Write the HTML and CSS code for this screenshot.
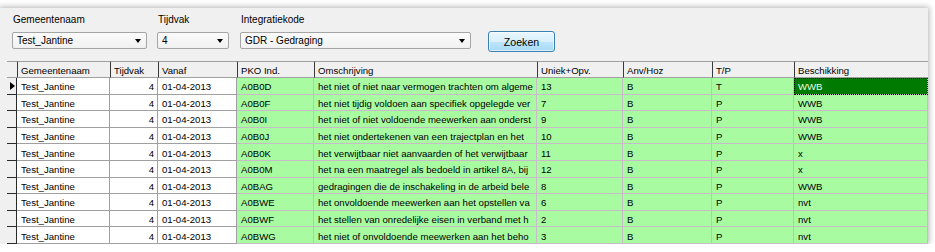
FILE: index.html
```html
<!DOCTYPE html>
<html lang="nl">
<head>
  <meta charset="UTF-8">
  <title>Integratiekodes</title>
  <link rel="stylesheet" href="styles.css">
</head>
<body>

  <div class="panel">
    <div class="filters">
      <div class="field field-gemeente">
        <label>Gemeentenaam</label>
        <div class="combo"><span>Test_Jantine</span><i class="arrow"></i></div>
      </div>
      <div class="field field-tijdvak">
        <label>Tijdvak</label>
        <div class="combo"><span>4</span><i class="arrow"></i></div>
      </div>
      <div class="field field-code">
        <label>Integratiekode</label>
        <div class="combo"><span>GDR - Gedraging</span><i class="arrow"></i></div>
      </div>
      <button class="search-btn">Zoeken</button>
    </div>

    <table class="grid">
      <colgroup>
        <col style="width:10px">
        <col style="width:93px">
        <col style="width:48px">
        <col style="width:79px">
        <col style="width:77px">
        <col style="width:223px">
        <col style="width:86px">
        <col style="width:89px">
        <col style="width:82px">
        <col style="width:134px">
      </colgroup>
      <thead>
        <tr>
          <th class="corner"></th>
          <th>Gemeentenaam</th>
          <th>Tijdvak</th>
          <th>Vanaf</th>
          <th>PKO Ind.</th>
          <th>Omschrijving</th>
          <th>Uniek+Opv.</th>
          <th>Anv/Hoz</th>
          <th>T/P</th>
          <th>Beschikking</th>
        </tr>
      </thead>
      <tbody id="rows"></tbody>
    </table>
  </div>

  <script>
    // omschrijving is shown only as far as the column is wide
    const data = [
      ["A0B0D", "het niet of niet naar vermogen trachten om algeme", "13", "B", "T", "WWB"],
      ["A0B0F", "het niet tijdig voldoen aan specifiek opgelegde ver", "7", "B", "P", "WWB"],
      ["A0B0I", "het niet of niet voldoende meewerken aan onderst", "9", "B", "P", "WWB"],
      ["A0B0J", "het niet ondertekenen van een trajectplan en het", "10", "B", "P", "WWB"],
      ["A0B0K", "het verwijtbaar niet aanvaarden of het verwijtbaar", "11", "B", "P", "x"],
      ["A0B0M", "het na een maatregel als bedoeld in artikel 8A, bij", "12", "B", "P", "x"],
      ["A0BAG", "gedragingen die de inschakeling in de arbeid bele", "8", "B", "P", "WWB"],
      ["A0BWE", "het onvoldoende meewerken aan het opstellen va", "6", "B", "P", "nvt"],
      ["A0BWF", "het stellen van onredelijke eisen in verband met h", "2", "B", "P", "nvt"],
      ["A0BWG", "het niet of onvoldoende meewerken aan het beho", "3", "B", "P", "nvt"]
    ];

    const tbody = document.getElementById("rows");

    data.forEach((row, i) => {
      const tr = document.createElement("tr");
      let html = '<td class="rowhead">' + (i === 0 ? '<i class="current"></i>' : '') + '</td>';
      html += '<td>Test_Jantine</td>';
      html += '<td class="num">4</td>';
      html += '<td>01-04-2013</td>';
      row.forEach((val, j) => {
        let cls = "green";
        if (i === 0 && j === 5) cls += " selected";
        html += '<td class="' + cls + '">' + val + '</td>';
      });
      tr.innerHTML = html;
      tbody.appendChild(tr);
    });
  </script>

</body>
</html>
```

FILE: styles.css
```css
* {
  box-sizing: border-box;
}

body {
  margin: 0;
  background-color: #fff;
  font-family: "Liberation Sans", Arial, sans-serif;
  font-size: 10px;
  color: #000;
}

.panel {
  margin-top: 8px;
  width: 928px;
  background-color: #f0f0f0;
  padding-top: 6px;
  box-shadow: 0 0 6px 1px rgba(0, 0, 0, 0.3);
}

.filters {
  display: flex;
  align-items: flex-start;
  padding-left: 12px;
  height: 38px;
}

.field label {
  display: block;
  height: 12px;
  line-height: 12px;
  padding-left: 1px;
}

.field-gemeente { width: 135px; }
.field-tijdvak { width: 72px; margin-left: 10px; }
.field-code { width: 231px; margin-left: 11px; }

.combo {
  margin-top: 6px;
  height: 17px;
  border: 1px solid #a5a5a5;
  border-radius: 2px;
  background: linear-gradient(#fbfbfb, #f1f1f1);
  display: flex;
  align-items: center;
  justify-content: space-between;
  padding: 0 5px 0 4px;
  line-height: 15px;
}

.arrow {
  width: 0;
  height: 0;
  border-left: 3.5px solid transparent;
  border-right: 3.5px solid transparent;
  border-top: 4px solid #000;
}

.search-btn {
  margin-top: 17px;
  margin-left: 17px;
  width: 67px;
  height: 21px;
  border: 1px solid #3c7fb1;
  border-radius: 3px;
  background: linear-gradient(#eaf6fd 0%, #d9f0fc 50%, #bee6fd 51%, #a7d9f5 100%);
  font-family: "Liberation Sans", Arial, sans-serif;
  font-size: 10.6px;
  color: #000;
  padding: 0;
  box-shadow: inset 0 0 0 1px rgba(255, 255, 255, 0.6);
}

.grid {
  margin-top: 9px;
  margin-left: 7px;
  width: 921px;
  table-layout: fixed;
  border-collapse: separate;
  border-spacing: 0;
  font-size: 9.6px;
}

.grid th {
  height: 17px;
  padding: 1px 0 0 3px;
  text-align: left;
  font-weight: normal;
  background-color: #f0f0f0;
  border-top: 1px solid #a0a0a0;
  border-left: 1px solid #3a3a3a;
  border-bottom: 1px solid #a0a0a0;
  white-space: nowrap;
  overflow: hidden;
}

.grid th.corner {
  border-left: none;
}

.grid td {
  height: 16.6px;
  padding: 2px 0 0 4px;
  white-space: nowrap;
  overflow: hidden;
  background-color: #fff;
  border-right: 1px solid #a0a0a0;
  border-bottom: 1px solid #a0a0a0;
  line-height: 13px;
}

.grid td.num {
  text-align: right;
  padding-right: 3px;
}

.grid td.rowhead {
  padding: 0;
  background-color: #f0f0f0;
  border-right: 1px solid #2a2a2a;
  border-bottom: 1px solid #2a2a2a;
  vertical-align: middle;
}

.current {
  display: block;
  margin-left: 3px;
  width: 0;
  height: 0;
  border-top: 4px solid transparent;
  border-bottom: 4px solid transparent;
  border-left: 5px solid #000;
}

.grid td.green {
  background-color: #a9fba2;
  border-right-color: #c8bcc8;
  border-bottom-color: #c8bcc8;
}

.grid td.selected {
  background-color: #007a00;
  color: #e8ffe8;
  outline: 1px dotted #000;
  outline-offset: -1px;
}
```
